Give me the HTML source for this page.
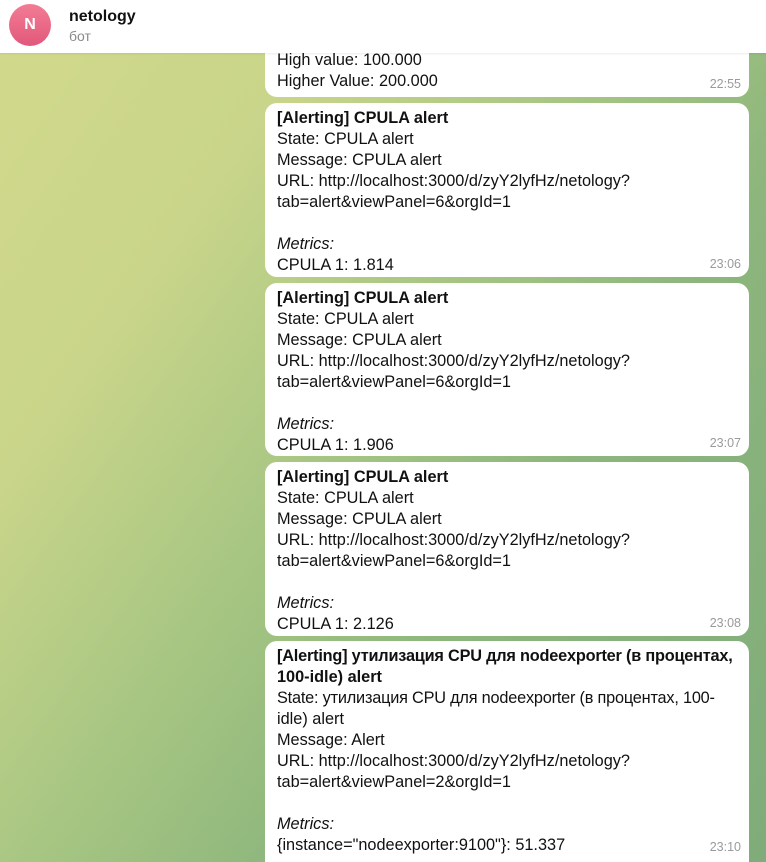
<!DOCTYPE html>
<html><head><meta charset="utf-8"><style>
*{margin:0;padding:0;box-sizing:border-box}
html{width:766px;height:862px;overflow:hidden}
body{width:766px;height:862px;overflow:hidden;position:relative;font-family:"Liberation Sans","Noto Sans CJK SC",sans-serif;
background:linear-gradient(125deg,#d2d98c 0%,#c9d58a 25%,#a9c783 45%,#8db67d 65%,#7fac7a 100%);}
.hdr{position:absolute;left:0;top:0;width:766px;height:53px;background:#fff;box-shadow:0 1px 2px rgba(0,0,0,.08);z-index:2}
.av{position:absolute;left:9px;top:4px;width:42px;height:42px;border-radius:50%;background:linear-gradient(#f27c95,#e2587a);color:#fff;font-weight:bold;font-size:16px;text-align:center;line-height:42px}
.nm{position:absolute;left:69px;top:8px;font-weight:bold;font-size:16px;color:#111}
.st{position:absolute;left:69px;top:28px;font-size:14px;color:#8a8a8a}
.b{position:absolute;left:265px;width:484px;background:#fff;border-radius:12px;padding:5px 12px;font-size:16.3px;line-height:21px;color:#111;overflow:hidden}
.t{position:absolute;right:8px;bottom:2px;font-size:12.5px;color:#9a9a9a}
b{font-weight:bold}
.nw{white-space:nowrap;letter-spacing:-0.2px}
</style></head><body>
<div class="hdr"><div class="av">N</div><div class="nm">netology</div><div class="st">бот</div></div>
<div class="b" style="top:30px;height:67px;padding-top:20px">High value: 100.000<br>Higher Value: 200.000<span class="t">22:55</span></div>
<div class="b" style="top:103px;height:174px"><b>[Alerting] CPULA alert</b><br>State: CPULA alert<br>Message: CPULA alert<br>URL: http://localhost:3000/d/zyY2lyfHz/netology?<br>tab=alert&amp;viewPanel=6&amp;orgId=1<br><br><i>Metrics:</i><br>CPULA 1: 1.814<span class="t">23:06</span></div>
<div class="b" style="top:283px;height:173px"><b>[Alerting] CPULA alert</b><br>State: CPULA alert<br>Message: CPULA alert<br>URL: http://localhost:3000/d/zyY2lyfHz/netology?<br>tab=alert&amp;viewPanel=6&amp;orgId=1<br><br><i>Metrics:</i><br>CPULA 1: 1.906<span class="t">23:07</span></div>
<div class="b" style="top:462px;height:174px"><b>[Alerting] CPULA alert</b><br>State: CPULA alert<br>Message: CPULA alert<br>URL: http://localhost:3000/d/zyY2lyfHz/netology?<br>tab=alert&amp;viewPanel=6&amp;orgId=1<br><br><i>Metrics:</i><br>CPULA 1: 2.126<span class="t">23:08</span></div>
<div class="b" style="top:641px;height:221px;border-radius:12px 12px 0 0"><b class="nw">[Alerting] утилизация CPU для nodeexporter (в процентах,</b><br><b>100-idle) alert</b><br><span class="nw">State: утилизация CPU для nodeexporter (в процентах, 100-</span><br>idle) alert<br>Message: Alert<br>URL: http://localhost:3000/d/zyY2lyfHz/netology?<br>tab=alert&amp;viewPanel=2&amp;orgId=1<br><br><i>Metrics:</i><br>{instance="nodeexporter:9100"}: 51.337<span class="t" style="bottom:4px">23:10</span></div>
</body></html>
